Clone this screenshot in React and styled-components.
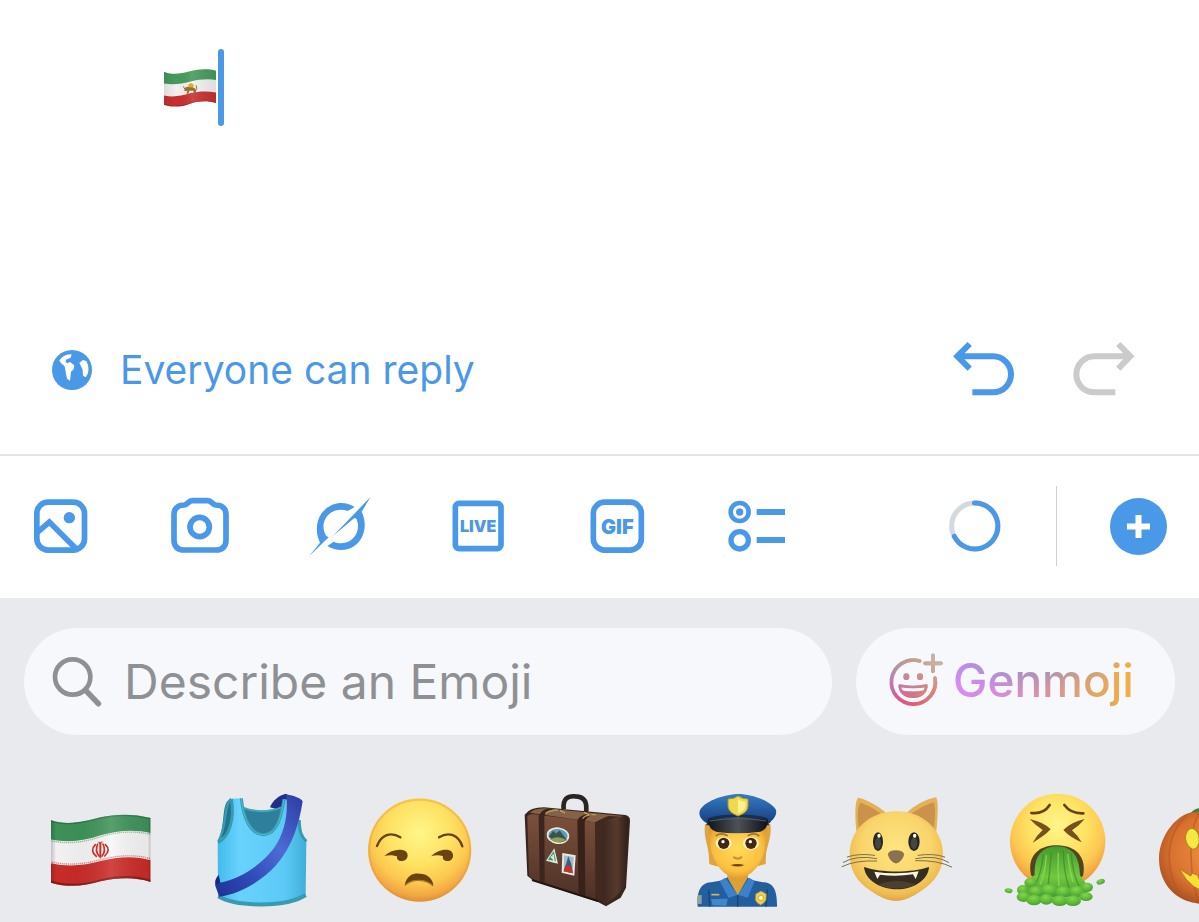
import React from "react";
import styled, { createGlobalStyle } from "styled-components";

const BLUE = "#4a98e8";

const GlobalStyle = createGlobalStyle`
  * { box-sizing: border-box; }
  body {
    margin: 0;
    background: #ffffff;
    font-family: Inter, "Liberation Sans", sans-serif;
  }
  button, input, textarea {
    font: inherit;
    border: 0;
    padding: 0;
    margin: 0;
    background: none;
    outline: none;
  }
  button { cursor: pointer; }
  svg { display: block; flex: none; overflow: visible; }
`;

const Screen = styled.main`
  display: flex;
  flex-direction: column;
  min-height: 100vh;
  overflow: hidden;
`;

const Editor = styled.section`
  min-height: 285px;
  padding: 49px 32px 0 163px;
`;

const Draft = styled.div`
  display: flex;
  align-items: center;
  gap: 2px;
  height: 77px;
`;

const Caret = styled.span`
  width: 6px;
  height: 77px;
  border-radius: 3px;
  background: ${BLUE};
`;

const DraftInput = styled.textarea`
  flex: 1;
  height: 77px;
  resize: none;
  font-size: 48px;
`;

const ReplyBar = styled.section`
  display: flex;
  align-items: center;
  justify-content: space-between;
  height: 171px;
  padding: 0 64px 0 51px;
  border-bottom: 2px solid #e4e5e6;
`;

const ReplySetting = styled.button`
  display: flex;
  align-items: center;
  gap: 27px;
  color: ${BLUE};
  font-size: 39px;
  line-height: 48px;
  white-space: nowrap;
`;

const History = styled.div`
  display: flex;
  gap: 58px;
`;

const IconButton = styled.button`
  display: block;
  color: ${(p) => p.$color || BLUE};
`;

const Toolbar = styled.section`
  display: flex;
  align-items: center;
  justify-content: space-between;
  height: 142px;
  padding: 0 32px 2px 30px;
`;

const Attachments = styled.div`
  display: flex;
  gap: 77px;
`;

const PostStatus = styled.div`
  display: flex;
  align-items: center;
`;

const Separator = styled.span`
  width: 1px;
  height: 80px;
  margin: 0 53px 0 55px;
  background: #cfd1d4;
`;

const Keyboard = styled.section`
  flex: 1;
  padding: 30px 0 10px;
  background: #e9eaee;
`;

const SearchRow = styled.div`
  display: flex;
  gap: 24px;
  padding: 0 24px;
`;

const SearchField = styled.label`
  display: flex;
  flex: 1;
  min-width: 0;
  align-items: center;
  gap: 20px;
  height: 107px;
  padding: 0 28px;
  border-radius: 54px;
  background: #f7f8fc;
`;

const SearchInput = styled.input`
  flex: 1;
  min-width: 0;
  height: 64px;
  font-size: 48px;
  color: #222326;
  &::placeholder { color: #8f9094; opacity: 1; }
`;

const GenmojiButton = styled.button`
  display: flex;
  flex: none;
  align-items: center;
  gap: 10px;
  width: 319px;
  height: 107px;
  padding: 0 32px 3px;
  border-radius: 54px;
  background: #f7f8fc;
`;

const GenmojiLabel = styled.span`
  font-size: 46px;
  line-height: 60px;
  font-weight: 500;
  color: transparent;
  background-image:
    radial-gradient(ellipse 100px 30px at 40% 20%, rgba(120, 150, 205, 0.7), rgba(120, 150, 205, 0)),
    linear-gradient(90deg, #d68cfa 0%, #d48be4 20%, #d592aa 48%, #dfa46c 75%, #f2b040 100%);
  background-clip: text;
  -webkit-background-clip: text;
`;

const EmojiStrip = styled.div`
  display: flex;
  gap: 39px;
  margin-top: 57px;
  padding-left: 41px;
  overflow: hidden;
`;

const EmojiButton = styled.button`
  display: block;
  flex: none;
`;

/* ---------- Interface icons ---------- */

const ToolIcon = ({ x, children }) => (
  <svg width="62" height="62" viewBox={`${x} 30 186 186`} fill="none" stroke="currentColor" strokeWidth="17" aria-hidden="true">
    {children}
  </svg>
);

const GlobeIcon = () => (
  <svg width="42" height="42" viewBox="62 58 126 126" aria-hidden="true">
    <circle cx="125" cy="121" r="60" fill="currentColor" />
    <path d="M87 94 C92 82 108 73 124 74 L121 84 L107 90 L106 97 L111 101 L119 97 L132 107 L130 119 L122 126 L119 153 L110 147 L106 126 L103 110 L94 102Z" fill="#fff" />
    <path d="M147 99 L158 91 L168 94 C177 111 177 130 166 143 L158 138 L157 120Z" fill="#fff" />
  </svg>
);

const UndoIcon = () => (
  <svg width="62" height="55" viewBox="69 50 186 165" fill="none" stroke="currentColor" strokeWidth="18" aria-hidden="true">
    <path d="M119 56 L82 93 L119 130 M82 93 H189 A54 54 0 0 1 189 201 H127" />
  </svg>
);

const RedoIcon = () => (
  <svg width="62" height="55" viewBox="429 50 186 165" fill="none" stroke="currentColor" strokeWidth="18" aria-hidden="true">
    <path d="M565 56 L601 93 L565 130 M601 93 H493 A54 54 0 0 0 493 201 H556" />
  </svg>
);

const ImageIcon = () => (
  <ToolIcon x={30}>
    <rect x="50.500" y="51.500" width="143" height="144" rx="34" />
    <path d="M51 143 L88 111 L169 192" />
    <circle cx="148" cy="98" r="17" fill="currentColor" stroke="none" />
  </ToolIcon>
);

const CameraIcon = () => (
  <ToolIcon x={447}>
    <path d="M493 60 C504 59 505 47 517 47 H563 C575 47 576 59 587 60 C606 60 618 71 618 88 V166 C618 184 607 195 589 195 H491 C473 195 462 184 462 166 V88 C462 71 474 60 493 60Z" />
    <circle cx="539" cy="126" r="29" />
  </ToolIcon>
);

const GrokIcon = () => (
  <ToolIcon x={864}>
    <g fill="currentColor" stroke="none">
      <path d="M1052 35 L1025 80 C1040 112 1036 145 1018 169 C996 198 954 203 922 183 L941 170 C964 180 988 174 1002 157 C1016 140 1017 119 1009 101 L1003 99 L939 153 L990 100 Z" />
      <path d="M867 214 L900 173 C886 145 887 110 905 85 C929 52 971 45 1004 66 L983 78 C958 69 933 77 919 97 C906 116 909 138 919 153 L926 157 Z" />
    </g>
  </ToolIcon>
);

const LiveIcon = () => (
  <ToolIcon x={51}>
    <rect x="76" y="55" width="137" height="136" rx="11" />
    <text x="144.500" y="141" textAnchor="middle" fontSize="48" fontWeight="900" fill="currentColor" stroke="none">LIVE</text>
  </ToolIcon>
);

const GifIcon = () => (
  <ToolIcon x={468}>
    <rect x="490" y="51.500" width="144" height="144" rx="34" />
    <text x="562" y="147" textAnchor="middle" fontSize="60" fontWeight="900" fill="currentColor" stroke="none">GIF</text>
  </ToolIcon>
);

const PollIcon = () => (
  <ToolIcon x={885}>
    <circle cx="929" cy="81" r="27" strokeWidth="14" />
    <circle cx="929" cy="81" r="11" fill="currentColor" stroke="none" />
    <circle cx="929" cy="166" r="26" strokeWidth="16" />
    <path d="M980 81 H1065 M980 165 H1065" strokeWidth="18" />
  </ToolIcon>
);

const ProgressRing = () => (
  <svg width="52" height="52" viewBox="56 75 156 156" fill="none" strokeWidth="15" role="img" aria-label="Character count">
    <circle cx="133" cy="153" r="69" stroke="#d2d9df" />
    <path d="M132 84 A69 69 0 1 1 72 184" stroke={BLUE} strokeLinecap="round" />
  </svg>
);

const AddIcon = () => (
  <svg width="57" height="57" viewBox="0 0 57 57" aria-hidden="true">
    <circle cx="28.500" cy="28.500" r="28.500" fill="currentColor" />
    <path d="M17 28.500 H40 M28.500 17 V40" stroke="#fff" strokeWidth="6" />
  </svg>
);

const SearchIcon = () => (
  <svg width="52" height="52" viewBox="96 78 156 156" fill="none" stroke="#8f9094" strokeLinecap="round" aria-hidden="true">
    <circle cx="158" cy="141" r="53" strokeWidth="14" />
    <path d="M197 181 L235 221" strokeWidth="17" />
  </svg>
);

const GenmojiShape = ({ paint }) => (
  <g fill="none" stroke={paint} strokeWidth="11" strokeLinecap="round">
    <path d="M180 94 A66 66 0 1 0 226 145" />
    <path d="M196 101 H244 M220 77 V125" />
    <path d="M120 168 Q160 176 200 168 C199 188 183 201 160 201 C137 201 121 188 120 168Z" strokeWidth="8" strokeLinejoin="round" />
    <path d="M123 182 Q160 189 197 182 Q187 202 160 202 Q133 202 123 182Z" fill={paint} stroke="none" />
    <ellipse cx="140" cy="141" rx="9" ry="10" fill={paint} stroke="none" />
    <ellipse cx="181" cy="141" rx="9" ry="10" fill={paint} stroke="none" />
  </g>
);

const GenmojiIcon = () => (
  <svg width="55" height="54" viewBox="85 70 165 162" aria-hidden="true">
    <defs>
      <linearGradient id="gen-down" gradientUnits="userSpaceOnUse" x1="0" y1="85" x2="0" y2="228">
        <stop offset="0" stopColor="#82a8e0" />
        <stop offset=".5" stopColor="#b873c8" />
        <stop offset="1" stopColor="#e44a78" />
      </linearGradient>
      <linearGradient id="gen-across" gradientUnits="userSpaceOnUse" x1="100" y1="210" x2="225" y2="100">
        <stop offset="0" stopColor="#d99a5e" stopOpacity="0" />
        <stop offset=".7" stopColor="#dc9a60" stopOpacity=".7" />
        <stop offset="1" stopColor="#cdb39c" stopOpacity=".95" />
      </linearGradient>
    </defs>
    <GenmojiShape paint="url(#gen-down)" />
    <GenmojiShape paint="url(#gen-across)" />
  </svg>
);

/* ---------- Emoji artwork ---------- */

const LionFlag = () => (
  <svg width="53" height="40" viewBox="69 114 159 120" role="img" aria-label="Lion and sun flag">
    <defs>
      <clipPath id="lf-clip">
        <path d="M72 125 C98 136 124 131 150 124 C178 116 204 116 228 122 V219 C204 212 178 212 150 221 C124 231 98 233 72 224Z" />
      </clipPath>
      <linearGradient id="lf-shade" x1="0" x2="1" y1="0" y2="0">
        <stop offset="0" stopColor="#000" stopOpacity=".1" />
        <stop offset=".25" stopColor="#000" stopOpacity="0" />
        <stop offset=".55" stopColor="#fff" stopOpacity=".1" />
        <stop offset="1" stopColor="#000" stopOpacity=".08" />
      </linearGradient>
    </defs>
    <g clipPath="url(#lf-clip)">
      <rect x="69" y="110" width="160" height="125" fill="#f3f1f0" />
      <path d="M69 105 H230 V150 C204 146 178 148 150 155 C124 162 98 165 69 160Z" fill="#469a5e" />
      <path d="M69 196 C98 203 124 198 150 190 C178 183 204 183 230 188 V240 H69Z" fill="#c8302f" />
      <path d="M72 224 C98 233 124 231 150 221 C178 212 204 212 228 219" fill="none" stroke="#7d1f20" strokeWidth="5" opacity=".55" />
      <rect x="69" y="110" width="160" height="125" fill="url(#lf-shade)" />
    </g>
    <circle cx="153" cy="168" r="8" fill="#dda83c" />
    <path d="M136 173 Q141 168 148 172 L162 173 Q170 176 167 190 L162 191 L160 182 L148 182 L145 192 L139 190 L142 182 L133 184Z" fill="#98702c" />
    <path d="M130 169 L137 182 M166 184 Q174 175 168 166" stroke="#98702c" strokeWidth="3" fill="none" />
  </svg>
);

const Emoji = ({ x, label, children }) => (
  <EmojiButton type="button" aria-label={label}>
    <svg width="120" height="120" viewBox={`${x} 36 360 360`} aria-hidden="true">
      {children}
    </svg>
  </EmojiButton>
);

const FlagEmoji = () => (
  <Emoji x={33} label="Flag of Iran">
    <defs>
      <clipPath id="fl-clip">
        <path d="M63 121 C115 138 165 124 212 112 C262 100 315 102 362 114 V306 C315 290 262 292 212 304 C165 318 115 324 63 308Z" />
      </clipPath>
      <linearGradient id="fl-shade" x1="0" x2="1" y1="0" y2="0">
        <stop offset="0" stopColor="#000" stopOpacity=".25" />
        <stop offset=".06" stopColor="#000" stopOpacity=".02" />
        <stop offset=".25" stopColor="#000" stopOpacity=".04" />
        <stop offset=".6" stopColor="#fff" stopOpacity=".12" />
        <stop offset=".96" stopColor="#000" stopOpacity=".06" />
        <stop offset="1" stopColor="#000" stopOpacity=".35" />
      </linearGradient>
    </defs>
    <g clipPath="url(#fl-clip)">
      <rect x="60" y="98" width="306" height="230" fill="#f7f6f6" />
      <path d="M60 95 H365 V160 C315 147 262 151 212 166 C165 182 115 190 60 178Z" fill="#3f935a" />
      <path d="M60 249 C115 262 165 256 212 243 C262 230 315 226 365 241 V330 H60Z" fill="#cb2c29" />
      <path d="M60 182 C115 194 165 186 212 170 C262 155 315 151 365 164" fill="none" stroke="#9cc5a5" strokeWidth="4" strokeDasharray="4 2" />
      <path d="M60 245 C115 258 165 252 212 239 C262 226 315 222 365 237" fill="none" stroke="#df8f8b" strokeWidth="4" strokeDasharray="4 2" />
      <path d="M63 121 C115 138 165 124 212 112 C262 100 315 102 362 114" fill="none" stroke="#1d6138" strokeWidth="8" opacity=".5" />
      <path d="M63 308 C115 324 165 318 212 304 C262 292 315 290 362 306" fill="none" stroke="#5b1512" strokeWidth="12" opacity=".6" />
      <rect x="60" y="98" width="306" height="230" fill="url(#fl-shade)" />
    </g>
    <g fill="none" stroke="#c9302c" strokeWidth="5" strokeLinecap="round">
      <path d="M211 190 V232" strokeWidth="6" />
      <path d="M203 192 Q194 213 207 228 M219 192 Q229 213 216 228" />
      <path d="M196 194 Q178 212 199 229 M226 194 Q244 210 224 228" />
      <path d="M206 187 Q211 190 217 186" strokeWidth="3" />
    </g>
  </Emoji>
);

const VestEmoji = () => (
  <Emoji x={510} label="Running shirt with sash">
    <defs>
      <linearGradient id="vs-body" x1="0" x2="1" y1="0" y2="0">
        <stop offset="0" stopColor="#42bcec" />
        <stop offset=".25" stopColor="#68d2fc" />
        <stop offset=".75" stopColor="#5ccaf6" />
        <stop offset="1" stopColor="#3faed8" />
      </linearGradient>
      <linearGradient id="vs-sash" x1="0" x2="1" y1="1" y2="0">
        <stop offset="0" stopColor="#1e3193" />
        <stop offset=".3" stopColor="#304bb8" />
        <stop offset=".6" stopColor="#4e6bd5" />
        <stop offset="1" stopColor="#2b3ba2" />
      </linearGradient>
    </defs>
    <path d="M720 82 C728 60 748 46 768 41 L790 58 L757 92Z" fill="#222f86" />
    <path d="M600 58 C572 70 588 140 564 182 C580 172 600 160 612 100 L614 58Z" fill="#24728b" />
    <path d="M636 80 Q690 104 756 80 L750 164 L650 164Z" fill="#2e7f9b" />
    <path d="M637 82 Q695 105 755 82" stroke="#3faabc" strokeWidth="6" fill="none" />
    <path d="M606 56 L634 55 C640 112 660 163 701 164 C742 163 754 108 762 58 L807 62 C807 112 804 155 829 182 L827 346 C770 384 620 384 564 350 L563 188 C600 174 615 112 606 56Z" fill="url(#vs-body)" />
    <path d="M634 55 C640 112 660 163 701 164 C742 163 754 108 762 58" stroke="#359bb1" strokeWidth="9" fill="none" />
    <path d="M634 55 C640 112 660 163 701 164 C742 163 754 108 762 58" stroke="#66c8da" strokeWidth="2" fill="none" />
    <path d="M604 57 C614 112 600 170 564 188" stroke="#359bb1" strokeWidth="9" fill="none" />
    <path d="M604 57 C580 70 592 142 565 184" stroke="#359bb1" strokeWidth="7" fill="none" />
    <path d="M565 349 C620 382 770 382 827 345" stroke="#3a9aaf" strokeWidth="12" fill="none" />
    <path d="M808 120 C808 155 814 170 829 184" stroke="#359bb1" strokeWidth="9" fill="none" />
    <path d="M769 43 C793 48 812 54 818 64 C808 132 784 205 738 256 C690 307 628 342 568 350 L556 318 Q554 298 566 286 L571 308 C640 295 700 247 732 204 C764 158 775 105 769 43Z" fill="url(#vs-sash)" />
    <path d="M566 285 L571 310 L557 314 Q553 298 566 285Z" fill="#1b277e" />
  </Emoji>
);

const FaceGradient = ({ id }) => (
  <radialGradient id={id} cx=".5" cy=".34" r=".67">
    <stop offset="0" stopColor="#fff68a" />
    <stop offset=".45" stopColor="#fee262" />
    <stop offset=".72" stopColor="#fcc850" />
    <stop offset=".9" stopColor="#f2a642" />
    <stop offset="1" stopColor="#d98938" />
  </radialGradient>
);

const UnamusedEmoji = () => (
  <Emoji x={27} label="Unamused face">
    <defs><FaceGradient id="un-face" /></defs>
    <circle cx="209" cy="210" r="155" fill="url(#un-face)" />
    <circle cx="209" cy="210" r="151" fill="none" stroke="#e09a36" strokeWidth="6" opacity=".4" />
    <g fill="none" stroke="#684219" strokeWidth="7" strokeLinecap="round">
      <path d="M81 198 C94 164 122 154 151 172 M267 172 C296 154 325 164 337 199" />
    </g>
    <g fill="#69440f">
      <path d="M103 228 C122 210 150 205 166 213 C178 223 174 240 158 243 C147 245 139 238 141 229 C126 224 114 225 103 228Z" />
      <path d="M243 229 C260 210 289 204 303 213 C314 224 310 240 296 243 C283 245 276 237 279 229 C266 224 254 226 243 229Z" />
      <path d="M164 316 C171 283 192 280 208 281 C228 280 249 294 250 317 C227 296 187 294 164 316Z" />
    </g>
    <path d="M165 316 C188 295 227 297 249 317" fill="none" stroke="#a9742b" strokeWidth="4" />
  </Emoji>
);

const LuggageEmoji = () => (
  <Emoji x={504} label="Luggage">
    <defs>
      <linearGradient id="lg-front" x1="0" x2="0" y1="0" y2="1">
        <stop offset="0" stopColor="#7b503b" />
        <stop offset="1" stopColor="#4c3026" />
      </linearGradient>
      <linearGradient id="lg-side" x1="0" x2="1" y1="0" y2="0">
        <stop offset="0" stopColor="#38231d" />
        <stop offset=".6" stopColor="#573a2d" />
        <stop offset="1" stopColor="#2e1e19" />
      </linearGradient>
    </defs>
    <path d="M641 88 C638 57 652 47 676 49 C706 50 712 69 708 98" fill="none" stroke="#2a2523" strokeWidth="14" />
    <path d="M524 104 Q540 82 582 82 L826 105 Q841 108 840 123 L828 323 L812 353 L768 379 L744 366 L550 302 L532 287Z" fill="#3a251e" />
    <path d="M540 98 Q552 86 584 85 L820 108 Q795 118 768 132Z" fill="#866149" />
    <path d="M532 111 Q534 101 553 103 L734 127 Q754 130 756 145 L750 353 Q744 365 730 358 L552 299 Q538 294 537 280Z" fill="url(#lg-front)" />
    <path d="M757 136 Q770 116 826 110 Q836 112 834 126 L826 308 Q818 337 766 374 L750 360Z" fill="url(#lg-side)" />
    <path d="M566 108 Q575 89 592 86 L611 88 Q588 93 583 109 L584 309 L569 304Z" fill="#3b251e" />
    <path d="M682 120 Q691 105 714 101 L732 104 Q709 108 704 126 L706 353 L686 346Z" fill="#382119" />
    <path d="M735 127 Q760 113 775 108 L820 110 Q779 114 761 132 L759 360 L736 357Z" fill="#42291f" />
    <path d="M586 101 Q593 92 624 90 M698 116 Q705 103 738 104" fill="none" stroke="#b59858" strokeWidth="4" />
    <path d="M546 300 L744 363" stroke="#211611" strokeWidth="6" />
    <path d="M630 91 L645 99 M702 97 L717 104" stroke="#c6a55c" strokeWidth="4" />
    <g transform="rotate(7 624 167)">
      <ellipse cx="624" cy="167" rx="34" ry="25" fill="#eee9dc" />
      <ellipse cx="624" cy="167" rx="29" ry="20" fill="#5c9cb9" />
      <path d="M597 173 L608 154 L617 161 L627 151 L652 177 Q640 189 616 185Z" fill="#37534b" />
      <path d="M602 181 Q625 164 650 177 Q638 188 616 186Z" fill="#929d55" />
    </g>
    <path d="M613 205 L624 251 L588 242Z" fill="#d8ebe2" />
    <path d="M611 213 L618 244 L594 239Z" fill="#2c967a" />
    <path d="M603 229 L613 240 M609 223 L612 247" stroke="#efe6be" strokeWidth="5" />
    <path d="M637 219 L677 226 L673 287 L635 278Z" fill="#eee8e3" />
    <path d="M642 226 L671 231 L668 280 L641 274Z" fill="#9cbdcb" />
    <path d="M655 229 L664 253 L668 280 L641 274 L648 253Z" fill="#465873" />
    <path d="M646 256 L665 260 L668 280 L641 274Z" fill="#bf3530" />
  </Emoji>
);

const PoliceEmoji = () => (
  <Emoji x={-9} label="Police officer">
    <defs>
      <linearGradient id="po-cap" x1="0" x2="0" y1="0" y2="1">
        <stop offset="0" stopColor="#367cc5" />
        <stop offset="1" stopColor="#153f7e" />
      </linearGradient>
      <radialGradient id="po-face" cx=".5" cy=".45" r=".6">
        <stop offset="0" stopColor="#ffdc58" />
        <stop offset=".7" stopColor="#fac140" />
        <stop offset="1" stopColor="#d99229" />
      </radialGradient>
      <linearGradient id="po-visor" x1="0" x2="1" y1="0" y2="0">
        <stop offset="0" stopColor="#10151d" />
        <stop offset=".5" stopColor="#4d5259" />
        <stop offset="1" stopColor="#0c1119" />
      </linearGradient>
    </defs>
    <path d="M75 132 C70 170 84 195 86 222 L88 252 L109 259 L235 258 L257 252 L258 222 C262 195 276 170 271 132Z" fill="#dfa340" />
    <path d="M142 256 H204 V304 L173 355 L142 304Z" fill="#dda033" />
    <path d="M87 147 Q89 129 172 130 Q257 130 260 147 L254 208 C244 261 207 294 173 295 C137 293 104 258 92 208Z" fill="url(#po-face)" />
    <path d="M53 380 C49 330 65 307 94 307 L128 301 L142 292 L173 346 L203 293 L219 301 L248 307 C278 307 292 327 291 380Z" fill="#245e9f" />
    <path d="M136 293 L172 344 L146 354 L119 303Z M207 293 L174 344 L203 353 L224 303Z" fill="#3c82cb" />
    <path d="M173 346 V380 M86 329 L89 380 M262 328 L258 380" stroke="#174477" strokeWidth="4" />
    <path d="M93 357 L143 356 L139 377 L98 376Z" fill="#3f88cc" />
    <path d="M94 344 H118" stroke="#d2b94b" strokeWidth="5" />
    <path d="M53 346 L65 345 V371 L51 373Z" fill="#8ba3a5" />
    <path d="M243 333 L259 342 L258 360 Q253 370 242 375 Q230 370 226 360 L227 342Z" fill="#ebcf54" stroke="#9e8b32" strokeWidth="2" />
    <circle cx="243" cy="354" r="8" fill="#fff4a2" stroke="#b19a3b" strokeWidth="2" />
    <path d="M79 129 Q52 112 60 90 C80 58 140 43 175 42 C214 42 272 62 288 90 C292 112 274 120 269 130 L244 123 L95 122Z" fill="url(#po-cap)" />
    <path d="M84 115 C112 100 236 99 264 116 L267 136 L79 136Z" fill="#172e4e" />
    <path d="M84 119 Q176 102 263 120 Q264 148 241 155 Q174 164 110 156 Q85 148 84 119Z" fill="url(#po-visor)" />
    <path d="M88 123 Q174 108 259 123" fill="none" stroke="#4c6079" strokeWidth="3" />
    <path d="M174 48 Q190 58 204 57 V79 Q203 98 174 108 Q146 98 144 79 V57 Q161 58 174 48Z" fill="#edda51" stroke="#a99829" strokeWidth="3" />
    <path d="M174 57 Q186 66 196 66 V79 Q195 92 174 100Z" fill="#fbf18d" />
    <path d="M107 168 Q122 156 143 167 M203 167 Q223 156 238 168" fill="none" stroke="#a5732a" strokeWidth="5" />
    <ellipse cx="131" cy="190" rx="24" ry="19" fill="#fff2c8" />
    <ellipse cx="213" cy="190" rx="24" ry="19" fill="#fff2c8" />
    <circle cx="131" cy="190" r="17" fill="#442712" />
    <circle cx="213" cy="190" r="17" fill="#442712" />
    <circle cx="129" cy="185" r="5" fill="#fff" />
    <circle cx="211" cy="185" r="5" fill="#fff" />
    <path d="M160 230 Q173 242 186 230" fill="none" stroke="#d08e2b" strokeWidth="6" />
    <path d="M152 255 Q173 249 193 255 Q174 264 152 255Z" fill="#793f1c" />
  </Emoji>
);

const CatEmoji = () => (
  <Emoji x={468} label="Grinning cat">
    <defs>
      <radialGradient id="ct-face" cx=".5" cy=".4" r=".62">
        <stop offset="0" stopColor="#ffe581" />
        <stop offset=".6" stopColor="#f9d56b" />
        <stop offset=".85" stopColor="#efbd51" />
        <stop offset="1" stopColor="#dc9f40" />
      </radialGradient>
    </defs>
    <path d="M530 160 C524 110 524 56 536 53 C563 60 593 77 618 98Z" fill="#e3b158" />
    <path d="M768 160 C774 110 776 54 767 52 C735 59 704 76 679 99Z" fill="#e3b158" />
    <path d="M538 152 C530 110 533 78 541 68 C564 76 588 88 606 104Z" fill="#cb924a" />
    <path d="M760 152 C767 110 767 76 760 67 C738 74 712 88 691 104Z" fill="#cb924a" />
    <path d="M648 94 C728 93 789 150 789 222 C789 268 768 304 722 334 C694 353 672 363 648 363 C624 363 602 353 574 334 C528 304 509 268 509 222 C509 150 568 95 648 94Z" fill="url(#ct-face)" />
    <g fill="none" stroke="#806e4d" strokeWidth="3" strokeLinecap="round">
      <path d="M590 236 Q530 224 490 247 M590 243 Q526 240 486 260 M707 236 Q767 224 806 247 M707 242 Q774 240 815 261 M584 226 Q535 219 502 231 M714 226 Q762 219 794 231" />
    </g>
    <ellipse cx="594" cy="185" rx="15" ry="28" fill="#292621" />
    <ellipse cx="702" cy="185" rx="17" ry="28" fill="#292621" />
    <ellipse cx="594" cy="190" rx="9" ry="18" fill="#454541" />
    <ellipse cx="702" cy="190" rx="10" ry="18" fill="#454541" />
    <ellipse cx="597" cy="167" rx="5" ry="6" fill="#fff" />
    <ellipse cx="704" cy="167" rx="5" ry="6" fill="#fff" />
    <path d="M625 223 Q626 212 647 212 Q670 212 671 223 C668 238 656 249 648 249 C639 248 629 240 625 223Z" fill="#8c7053" stroke="#755d43" strokeWidth="2" />
    <path d="M552 261 C605 279 694 279 747 261 C745 300 700 328 650 328 C599 327 555 299 552 261Z" fill="#352c22" />
    <path d="M583 275 Q649 285 716 274 L707 297 L699 283 Q648 291 600 284 L592 297Z" fill="#fff6dd" />
    <path d="M593 314 Q648 292 708 314 Q649 337 593 314Z" fill="#4b3f31" />
  </Emoji>
);

const VomitEmoji = () => (
  <Emoji x={15} label="Face vomiting">
    <defs>
      <FaceGradient id="vm-face" />
      <linearGradient id="vm-slime" x1="0" x2="0" y1="0" y2="1">
        <stop offset="0" stopColor="#459a2e" />
        <stop offset=".6" stopColor="#72c83f" />
        <stop offset="1" stopColor="#479b31" />
      </linearGradient>
      <radialGradient id="vm-blob" cx=".45" cy=".3" r=".7">
        <stop offset="0" stopColor="#82d84a" />
        <stop offset=".6" stopColor="#60b83b" />
        <stop offset="1" stopColor="#4a9f34" />
      </radialGradient>
    </defs>
    <circle cx="203" cy="184" r="143" fill="url(#vm-face)" />
    <g fill="none" stroke="#65421b" strokeWidth="8" strokeLinecap="round">
      <path d="M124 99 Q161 103 179 75 M223 75 Q243 102 280 100" />
    </g>
    <path d="M119 117 Q163 127 182 148 Q163 168 128 188 Q140 166 158 150 Q138 137 119 117Z M284 117 Q241 127 220 150 Q240 172 275 187 Q264 167 246 151 Q267 138 284 117Z" fill="#77501b" />
    <path d="M123 285 C110 227 148 195 203 196 C257 197 291 231 279 288 L255 304 H137Z" fill="#50451c" />
    <path d="M134 285 C132 227 157 199 201 199 C247 200 268 227 270 286 L288 310 Q296 328 289 352 L107 352 Q97 319 112 299Z" fill="url(#vm-slime)" />
    <g fill="none" stroke="#388c2c" strokeWidth="4" opacity=".7">
      <path d="M160 223 Q155 275 137 313 M184 217 Q180 270 173 329 M220 211 Q221 278 237 323 M244 220 Q246 275 267 318" />
    </g>
    <g fill="none" stroke="#93e258" strokeWidth="4" opacity=".7">
      <path d="M169 224 Q166 275 151 313 M205 218 Q202 270 207 318 M233 222 Q237 265 249 306" />
    </g>
    <g fill="url(#vm-blob)">
      <ellipse cx="122" cy="308" rx="19" ry="14" /><ellipse cx="291" cy="322" rx="18" ry="14" />
      <ellipse cx="98" cy="330" rx="17" ry="15" /><ellipse cx="101" cy="351" rx="21" ry="15" />
      <ellipse cx="137" cy="334" rx="22" ry="15" /><ellipse cx="178" cy="330" rx="25" ry="17" />
      <ellipse cx="219" cy="335" rx="23" ry="16" /><ellipse cx="260" cy="334" rx="23" ry="16" />
      <ellipse cx="288" cy="350" rx="20" ry="13" /><ellipse cx="132" cy="360" rx="23" ry="16" />
      <ellipse cx="169" cy="358" rx="21" ry="16" /><ellipse cx="209" cy="362" rx="24" ry="16" />
      <ellipse cx="249" cy="362" rx="24" ry="16" />
      <ellipse cx="56" cy="332" rx="12" ry="7" transform="rotate(10 56 332)" /><ellipse cx="332" cy="305" rx="13" ry="8" transform="rotate(-18 332 305)" />
    </g>
  </Emoji>
);

const PumpkinEmoji = () => (
  <Emoji x={492} label="Jack-o-lantern">
    <defs>
      <radialGradient id="pk-body" cx=".5" cy=".45" r=".6">
        <stop offset="0" stopColor="#ef9242" />
        <stop offset=".65" stopColor="#d9712f" />
        <stop offset="1" stopColor="#a04a20" />
      </radialGradient>
    </defs>
    <path d="M600 106 C604 90 620 84 638 84 L650 60 L674 66 L675 103Z" fill="#4b7c36" />
    <path d="M620 98 C578 87 506 157 507 238 C508 318 564 363 617 369 C650 379 694 374 714 368 C784 359 828 310 828 235 C828 151 762 88 711 98 Q664 82 620 98Z" fill="url(#pk-body)" />
    <path d="M590 106 C530 160 518 262 572 346 M625 101 C593 163 598 284 626 367 M669 99 V370" fill="none" stroke="#b4571f" strokeWidth="5" opacity=".6" />
    <path d="M586 176 Q587 145 607 144 Q629 151 628 184 Q625 208 608 208 Q590 202 586 176Z" fill="#f5e840" stroke="#bd842c" strokeWidth="4" />
    <path d="M711 176 Q710 145 729 144 Q751 151 748 184 Q745 208 729 208 Q713 202 711 176Z" fill="#f5e840" />
    <path d="M568 266 L602 288 L607 279 L623 286 L631 307 Q684 316 737 286 Q756 282 765 267 Q744 339 676 342 Q603 337 568 266Z" fill="#f6df37" stroke="#ba742a" strokeWidth="3" />
  </Emoji>
);

const attachments = [
  { label: "Add photo", Icon: ImageIcon },
  { label: "Open camera", Icon: CameraIcon },
  { label: "Grok", Icon: GrokIcon },
  { label: "Go live", Icon: LiveIcon },
  { label: "Add GIF", Icon: GifIcon },
  { label: "Add poll", Icon: PollIcon },
];

export default function App() {
  return (
    <>
      <GlobalStyle />
      <Screen>
        <Editor>
          <Draft>
            <LionFlag />
            <Caret />
            <DraftInput aria-label="Post text" />
          </Draft>
        </Editor>
        <ReplyBar>
          <ReplySetting type="button">
            <GlobeIcon />
            Everyone can reply
          </ReplySetting>
          <History>
            <IconButton type="button" aria-label="Undo"><UndoIcon /></IconButton>
            <IconButton type="button" aria-label="Redo" $color="#cbcbcb"><RedoIcon /></IconButton>
          </History>
        </ReplyBar>
        <Toolbar>
          <Attachments>
            {attachments.map(({ label, Icon }) => (
              <IconButton key={label} type="button" aria-label={label}><Icon /></IconButton>
            ))}
          </Attachments>
          <PostStatus>
            <ProgressRing />
            <Separator />
            <IconButton type="button" aria-label="Add post"><AddIcon /></IconButton>
          </PostStatus>
        </Toolbar>
        <Keyboard>
          <SearchRow>
            <SearchField>
              <SearchIcon />
              <SearchInput type="text" aria-label="Describe an Emoji" placeholder="Describe an Emoji" />
            </SearchField>
            <GenmojiButton type="button">
              <GenmojiIcon />
              <GenmojiLabel>Genmoji</GenmojiLabel>
            </GenmojiButton>
          </SearchRow>
          <EmojiStrip>
            <FlagEmoji />
            <VestEmoji />
            <UnamusedEmoji />
            <LuggageEmoji />
            <PoliceEmoji />
            <CatEmoji />
            <VomitEmoji />
            <PumpkinEmoji />
          </EmojiStrip>
        </Keyboard>
      </Screen>
    </>
  );
}
